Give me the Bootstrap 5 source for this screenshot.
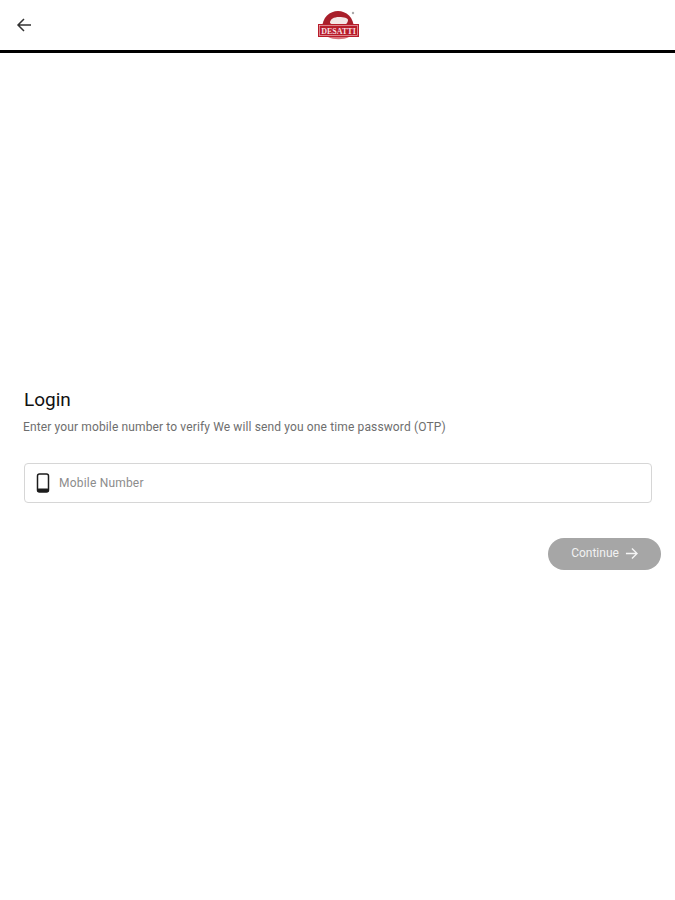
<!DOCTYPE html>
<html lang="en">
<head>
  <meta charset="UTF-8" />
  <meta name="viewport" content="width=device-width, initial-scale=1.0"/>
  <title>Login</title>
  <link href="https://cdn.jsdelivr.net/npm/bootstrap@5.3.0/dist/css/bootstrap.min.css" rel="stylesheet">
  <style>
    body {
      background-color: #fff;
      font-family: Roboto, "Liberation Sans", sans-serif;
    }
    .top-bar {
      height: 53px;
      border-bottom: 3px solid #000;
      padding-left: 16px;
    }
    .back-btn {
      width: 16px;
      height: 16px;
      line-height: 0;
    }
    .logo-box {
      left: 317px;
      top: 9px;
    }
    .login-box {
      padding: 335px 14px 0 23px;
    }
    .login-title {
      font-size: 19px;
      line-height: 24px;
      font-weight: 400;
      color: #111;
      margin-bottom: 6px;
      margin-left: 1px;
    }
    .login-sub {
      font-size: 12px;
      line-height: 18px;
      color: #6e6e6e;
      letter-spacing: .13px;
      margin-bottom: 27px;
    }
    .mobile-field {
      height: 40px;
      width: 628px;
      margin-left: 1px;
      border: 1px solid #d6d6d6;
      border-radius: 4px;
      padding-left: 11px;
      gap: 9px;
    }
    .mobile-input {
      border: 0;
      outline: 0;
      padding: 0;
      font-size: 12px;
      letter-spacing: .2px;
      color: #666;
    }
    .mobile-input::placeholder {
      color: #8c8c8c;
      opacity: 1;
    }
    .continue-row {
      padding-top: 35px;
    }
    .continue-btn {
      width: 113px;
      height: 32px;
      border-radius: 16px;
      border: 0;
      background-color: #a6a6a6;
      color: #f2f2f2;
      font-size: 12px;
      gap: 6px;
      padding: 0 0 2px;
    }
  </style>
</head>
<body>
  <header class="top-bar d-flex align-items-center position-relative">
    <button type="button" class="back-btn btn p-0 border-0" aria-label="Back">
      <svg width="16" height="16" viewBox="0 0 16 16" fill="none" stroke="#333" stroke-width="1.500">
        <path d="M15 8H2M8 2 2 8l6 6"/>
      </svg>
    </button>
    <div class="logo-box position-absolute">
      <svg width="44" height="32" viewBox="0 0 44 32">
        <path d="M5 20C5 8 13 2 21 2s16 6 16 18z" fill="#a81e2a"/>
        <path d="M13 14c0-4 4-6 9-6s9 1 9 3c0 3-3 6-7 6-3 0-4-1-5-2-1 1-4 1-6-1z" fill="#f3e6e6"/>
        <rect x="1" y="15" width="41" height="13" fill="#b81c2a"/>
        <rect x="2.500" y="16.500" width="38" height="10" fill="none" stroke="#f1c9cc" stroke-width=".6"/>
        <text x="21.500" y="24.500" text-anchor="middle" font-family="Liberation Serif" font-size="8" font-weight="700" fill="#f7dfe0">DESATTI</text>
        <path d="M11 28c5 3 16 3 21 0z" fill="#d9737b"/>
        <circle cx="36" cy="4" r="1.200" fill="#aaa"/>
      </svg>
    </div>
  </header>

  <main class="login-box">
    <h1 class="login-title">Login</h1>
    <p class="login-sub">Enter your mobile number to verify We will send you one time password (OTP)</p>

    <div class="mobile-field d-flex align-items-center">
      <svg width="14" height="20" viewBox="0 0 14 20" class="flex-shrink-0">
        <rect x="1.500" y="1" width="11" height="18" rx="2" fill="none" stroke="#1c1c1c" stroke-width="1.500"/>
        <rect x="1.500" y="15.500" width="11" height="3.500" rx="1" fill="#1c1c1c"/>
      </svg>
      <input class="mobile-input flex-grow-1" type="tel" placeholder="Mobile Number" />
    </div>

    <div class="continue-row d-flex justify-content-end">
      <button type="button" class="continue-btn btn d-flex align-items-center justify-content-center">
        Continue
        <svg width="13" height="13" viewBox="0 0 14 14" fill="none" stroke="#f5f5f5" stroke-width="1.500">
          <path d="M1 7h12M7.500 1.500 13 7l-5.500 5.500"/>
        </svg>
      </button>
    </div>
  </main>

  <script src="https://cdn.jsdelivr.net/npm/bootstrap@5.3.0/dist/js/bootstrap.bundle.min.js"></script>
</body>
</html>
